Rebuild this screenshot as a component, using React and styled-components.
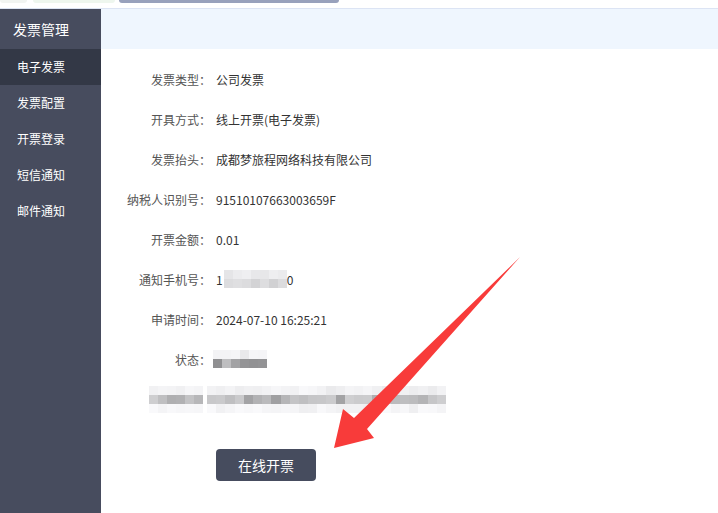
import React from 'react';
import styled, { createGlobalStyle } from 'styled-components';

const GlobalStyle = createGlobalStyle`
  html, body { margin: 0; padding: 0; background: #fff; }
  body { font-family: "Noto Sans CJK SC", "Noto Sans", sans-serif; }
`;

const menu = ['电子发票', '发票配置', '开票登录', '短信通知', '邮件通知'];

const fields = [
  { label: '发票类型：', value: '公司发票' },
  { label: '开具方式：', value: '线上开票(电子发票)' },
  { label: '发票抬头：', value: '成都梦旅程网络科技有限公司' },
  { label: '纳税人识别号：', value: '91510107663003659F' },
  { label: '开票金额：', value: '0.01' },
  { label: '通知手机号：', phone: true },
  { label: '申请时间：', value: '2024-07-10 16:25:21' },
  { label: '状态：', status: true },
  { hidden: true },
];

// cheap deterministic noise for the pixelated (blurred) parts of the shot
const shade = (seed, base, spread) => {
  const x = Math.sin(seed * 12.9898) * 43758.5453;
  const v = Math.round(base - (x - Math.floor(x)) * spread);
  return `rgb(${v},${v},${v + 2})`;
};

const mosaic = (cols, rowBases, seed) =>
  rowBases.map((r, ri) =>
    Array.from({ length: cols }, (_, ci) => shade(seed + ri * 31 + ci, r[0], r[1]))
  );

const Mosaic = ({ cells, size, shift }) => (
  <MosaicGrid $cols={cells[0].length} $size={size} $shift={shift}>
    {cells.flat().map((c, i) => (
      <Cell key={i} $c={c} />
    ))}
  </MosaicGrid>
);

const App = () => (
  <>
    <GlobalStyle />
    <Page>
      <TopBar>
        <Tab $w={27} $bg="#f1f4f1" />
        <Tab $w={82} $bg="#eef6ee" $ml={6} />
        <Tab $w={220} $bg="#98a1bc" $ml={4} />
      </TopBar>
      <Body>
        <Sidebar>
          <SideTitle>发票管理</SideTitle>
          {menu.map((m, i) => (
            <MenuItem key={m} $active={i === 0}>{m}</MenuItem>
          ))}
        </Sidebar>
        <Main>
          <Band />
          <Form>
            {fields.map((f, i) => (
              <Row key={i}>
                {f.hidden ? (
                  <>
                    <LabelCell>
                      <Mosaic size={9} cells={mosaic(6, [[248, 12], [214, 40], [250, 10]], 3)} />
                    </LabelCell>
                    <Mosaic size={9.2} cells={mosaic(26, [[248, 14], [208, 55], [250, 12]], 17)} />
                  </>
                ) : (
                  <>
                    <Label>{f.label}</Label>
                    {f.phone && (
                      <Value>
                        1
                        <Mosaic size={9} shift={1} cells={mosaic(7, [[242, 14], [224, 22]], 41)} />
                        0
                      </Value>
                    )}
                    {f.status && (
                      <Mosaic size={9} shift={-3} cells={mosaic(6, [[246, 16], [200, 70]], 59)} />
                    )}
                    {f.value && <Value>{f.value}</Value>}
                  </>
                )}
              </Row>
            ))}
            <Actions>
              <Button>在线开票</Button>
            </Actions>
          </Form>
          <Arrow viewBox="0 0 718 513" width="718" height="513">
            <polygon
              points="520,257 367,429 374,438 334,448 343,409 354,418"
              fill="#f83b3a"
            />
          </Arrow>
        </Main>
      </Body>
    </Page>
  </>
);

const Page = styled.div`
  width: 718px;
  height: 513px;
  display: flex;
  flex-direction: column;
  overflow: hidden;
  position: relative;
`;

const TopBar = styled.div`
  height: 8px;
  border-bottom: 1px solid #dce4f4;
  display: flex;
  align-items: flex-start;
`;

const Tab = styled.div`
  width: ${p => p.$w}px;
  height: 3px;
  margin-left: ${p => p.$ml || 0}px;
  background: ${p => p.$bg};
  border-radius: 0 0 3px 3px;
`;

const Body = styled.div`
  flex: 1;
  display: flex;
`;

const Sidebar = styled.div`
  width: 101px;
  background: #474c5e;
  color: #fff;
`;

const SideTitle = styled.div`
  height: 40px;
  line-height: 40px;
  padding-left: 13px;
  font-size: 14px;
`;

const MenuItem = styled.div`
  height: 36px;
  line-height: 36px;
  padding-left: 17px;
  font-size: 12px;
  background: ${p => (p.$active ? '#333846' : 'transparent')};
`;

const Main = styled.div`
  flex: 1;
`;

const Band = styled.div`
  height: 40px;
  background: #eff6fe;
`;

const Form = styled.div`
  padding-top: 10px;
`;

const Row = styled.div`
  height: 40px;
  display: flex;
  align-items: center;
`;

const LabelCell = styled.div`
  width: 102px;
  margin-right: 4px;
  display: flex;
  justify-content: flex-end;
`;

const Label = styled.div`
  width: 110px;
  margin-right: 5px;
  text-align: right;
  font-size: 12px;
  color: #555;
`;

const Value = styled.div`
  display: flex;
  align-items: center;
  font-size: 12px;
  color: #333;
`;

const MosaicGrid = styled.div`
  display: grid;
  grid-template-columns: repeat(${p => p.$cols}, ${p => p.$size}px);
  grid-auto-rows: 9px;
  margin-left: ${p => p.$shift || 0}px;
  filter: blur(0.6px);
`;

const Cell = styled.div`
  background: ${p => p.$c};
`;

const Actions = styled.div`
  padding: 30px 0 0 115px;
`;

const Button = styled.button`
  width: 100px;
  height: 32px;
  border: none;
  border-radius: 4px;
  background: #464c5e;
  color: #fff;
  font-family: "Noto Sans CJK SC", sans-serif;
  font-size: 14px;
`;

const Arrow = styled.svg`
  position: absolute;
  left: 0;
  top: 0;
  pointer-events: none;
`;

export default App;
